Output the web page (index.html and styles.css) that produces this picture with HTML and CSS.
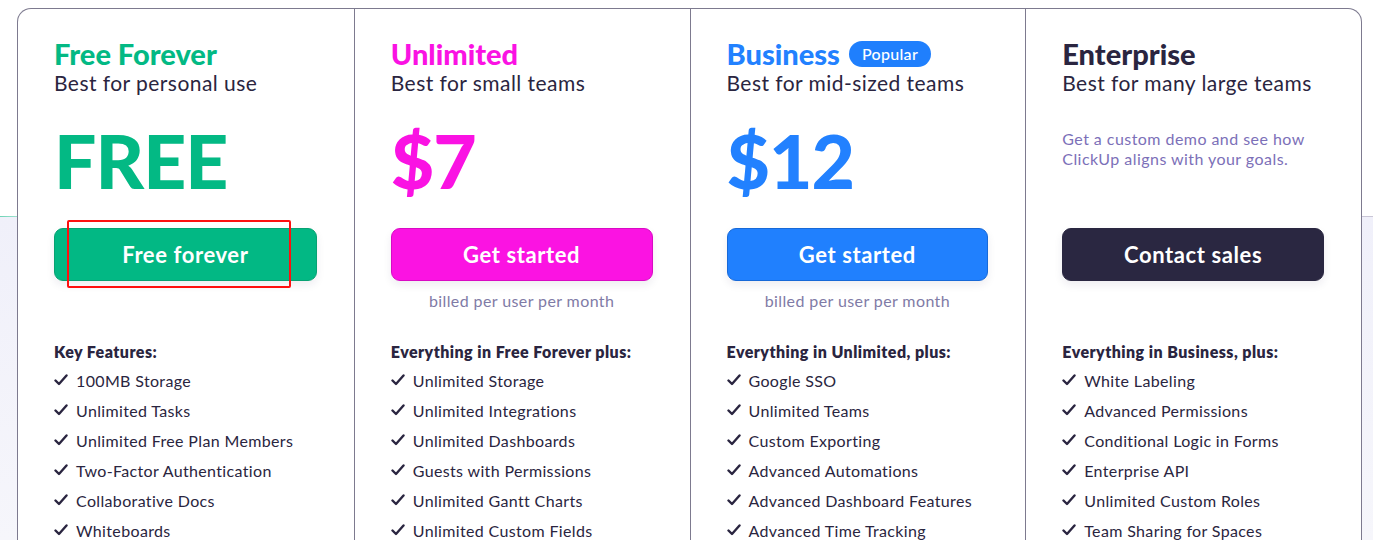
FILE: index.html
```html
<!DOCTYPE html>
<html lang="en">
<head>
<meta charset="utf-8">
<title>Pricing</title>
<link rel="stylesheet" href="styles.css">
</head>
<body>
<div class="page">
  <div class="card">
    <div class="plan">
      <div class="head">
        <h2 class="title green">Free Forever</h2>
        <p class="sub">Best for personal use</p>
        <div class="price green">FREE</div>
      </div>
      <div class="btnwrap">
        <a class="btn btn-green">Free forever</a>
        <span class="annot"></span>
      </div>
      <p class="billed blank">&nbsp;</p>
      <h3 class="feat-head">Key Features:</h3>
      <ul class="feats">
        <li><svg viewBox="0 0 14 12"><path d="M1.5 6.5 L5 10 L12.5 1.5"/></svg>100MB Storage</li>
        <li><svg viewBox="0 0 14 12"><path d="M1.5 6.5 L5 10 L12.5 1.5"/></svg>Unlimited Tasks</li>
        <li><svg viewBox="0 0 14 12"><path d="M1.5 6.5 L5 10 L12.5 1.5"/></svg>Unlimited Free Plan Members</li>
        <li><svg viewBox="0 0 14 12"><path d="M1.5 6.5 L5 10 L12.5 1.5"/></svg>Two-Factor Authentication</li>
        <li><svg viewBox="0 0 14 12"><path d="M1.5 6.5 L5 10 L12.5 1.5"/></svg>Collaborative Docs</li>
        <li><svg viewBox="0 0 14 12"><path d="M1.5 6.5 L5 10 L12.5 1.5"/></svg>Whiteboards</li>
      </ul>
    </div>
    <div class="plan">
      <div class="head">
        <h2 class="title pink">Unlimited</h2>
        <p class="sub">Best for small teams</p>
        <div class="price pink">$7</div>
      </div>
      <div class="btnwrap"><a class="btn btn-pink">Get started</a></div>
      <p class="billed">billed per user per month</p>
      <h3 class="feat-head">Everything in Free Forever plus:</h3>
      <ul class="feats">
        <li><svg viewBox="0 0 14 12"><path d="M1.5 6.5 L5 10 L12.5 1.5"/></svg>Unlimited Storage</li>
        <li><svg viewBox="0 0 14 12"><path d="M1.5 6.5 L5 10 L12.5 1.5"/></svg>Unlimited Integrations</li>
        <li><svg viewBox="0 0 14 12"><path d="M1.5 6.5 L5 10 L12.5 1.5"/></svg>Unlimited Dashboards</li>
        <li><svg viewBox="0 0 14 12"><path d="M1.5 6.5 L5 10 L12.5 1.5"/></svg>Guests with Permissions</li>
        <li><svg viewBox="0 0 14 12"><path d="M1.5 6.5 L5 10 L12.5 1.5"/></svg>Unlimited Gantt Charts</li>
        <li><svg viewBox="0 0 14 12"><path d="M1.5 6.5 L5 10 L12.5 1.5"/></svg>Unlimited Custom Fields</li>
      </ul>
    </div>
    <div class="plan">
      <div class="head">
        <h2 class="title blue">Business <span class="badge">Popular</span></h2>
        <p class="sub">Best for mid-sized teams</p>
        <div class="price blue">$12</div>
      </div>
      <div class="btnwrap"><a class="btn btn-blue">Get started</a></div>
      <p class="billed">billed per user per month</p>
      <h3 class="feat-head">Everything in Unlimited, plus:</h3>
      <ul class="feats">
        <li><svg viewBox="0 0 14 12"><path d="M1.5 6.5 L5 10 L12.5 1.5"/></svg>Google SSO</li>
        <li><svg viewBox="0 0 14 12"><path d="M1.5 6.5 L5 10 L12.5 1.5"/></svg>Unlimited Teams</li>
        <li><svg viewBox="0 0 14 12"><path d="M1.5 6.5 L5 10 L12.5 1.5"/></svg>Custom Exporting</li>
        <li><svg viewBox="0 0 14 12"><path d="M1.5 6.5 L5 10 L12.5 1.5"/></svg>Advanced Automations</li>
        <li><svg viewBox="0 0 14 12"><path d="M1.5 6.5 L5 10 L12.5 1.5"/></svg>Advanced Dashboard Features</li>
        <li><svg viewBox="0 0 14 12"><path d="M1.5 6.5 L5 10 L12.5 1.5"/></svg>Advanced Time Tracking</li>
      </ul>
    </div>
    <div class="plan">
      <div class="head">
        <h2 class="title dark">Enterprise</h2>
        <p class="sub">Best for many large teams</p>
        <p class="desc">Get a custom demo and see how ClickUp aligns with your goals.</p>
      </div>
      <div class="btnwrap"><a class="btn btn-dark">Contact sales</a></div>
      <p class="billed blank">&nbsp;</p>
      <h3 class="feat-head">Everything in Business, plus:</h3>
      <ul class="feats">
        <li><svg viewBox="0 0 14 12"><path d="M1.5 6.5 L5 10 L12.5 1.5"/></svg>White Labeling</li>
        <li><svg viewBox="0 0 14 12"><path d="M1.5 6.5 L5 10 L12.5 1.5"/></svg>Advanced Permissions</li>
        <li><svg viewBox="0 0 14 12"><path d="M1.5 6.5 L5 10 L12.5 1.5"/></svg>Conditional Logic in Forms</li>
        <li><svg viewBox="0 0 14 12"><path d="M1.5 6.5 L5 10 L12.5 1.5"/></svg>Enterprise API</li>
        <li><svg viewBox="0 0 14 12"><path d="M1.5 6.5 L5 10 L12.5 1.5"/></svg>Unlimited Custom Roles</li>
        <li><svg viewBox="0 0 14 12"><path d="M1.5 6.5 L5 10 L12.5 1.5"/></svg>Team Sharing for Spaces</li>
      </ul>
    </div>
  </div>
</div>
</body>
</html>
```
FILE: styles.css
```css
* { box-sizing: border-box; }
html, body { margin: 0; padding: 0; }
body {
  font-family: "Lato", "Open Sans", sans-serif;
  color: #2a2540;
  background:
    linear-gradient(to right, #6fd3b6 0, #9fe3cf 17px, transparent 17px) 0 216px / 100% 1px no-repeat,
    linear-gradient(to bottom, #ffffff 0, #ffffff 216px, #c9c6d6 216px, #c9c6d6 217px, #f0f0fa 217px, #f6f6fb 540px);
  overflow: hidden;
  height: 540px;
}
.page {
  padding: 8px 11px 0 17px;
}
.card {
  display: grid;
  grid-template-columns: repeat(4, 1fr);
  background: #fff;
  border: 1.5px solid #7d7a8f;
  border-bottom: none;
  border-radius: 14px 14px 0 0;
  height: 560px;
}
.plan {
  padding: 29px 37px 0 36px;
  display: flex;
  flex-direction: column;
}
.plan + .plan { border-left: 1px solid #7d7a8f; padding-left: 36px; }
.head { height: 190px; }
.title {
  margin: 0;
  font-size: 29px;
  line-height: 32px;
  font-weight: 900;
  display: flex;
  align-items: center;
  gap: 9px;
}
.green { color: #03b984; }
.pink { color: #fa12e3; }
.blue { color: #2281ff; }
.dark { color: #2a2540; }
.badge {
  background: #1f7ffd;
  color: #fff;
  font-size: 16px;
  font-weight: 500;
  letter-spacing: 0.3px;
  line-height: 26px;
  padding: 0 13px;
  border-radius: 13px;
}
.sub {
  margin: -1px 0 0;
  font-size: 21px;
  letter-spacing: 0.45px;
  line-height: 28px;
  color: #2a2540;
}
.price {
  margin-top: 21px;
  font-size: 75px;
  line-height: 84px;
  font-weight: 900;
  letter-spacing: -1px;
}
.desc {
  margin: 32px 0 0;
  font-size: 16px;
  letter-spacing: 0.45px;
  line-height: 20px;
  color: #7c70b8;
  max-width: 260px;
}
.btnwrap { position: relative; }
.btn {
  display: flex;
  align-items: center;
  justify-content: center;
  height: 53px;
  border-radius: 9px;
  color: #fff;
  font-size: 22px;
  letter-spacing: 0.6px;
  font-weight: 700;
  box-shadow: 0 4px 8px rgba(40, 30, 80, 0.08);
}
.btn-green { background: #02b884; border: 1px solid #07a273; }
.btn-pink { background: #fb13e2; border: 1px solid #d90ac4; }
.btn-blue { background: #2080fe; border: 1px solid #1769d8; }
.btn-dark { background: #2a2741; border: 1px solid #2a2741; }
.annot {
  position: absolute;
  left: 13px;
  top: -8px;
  width: 224px;
  height: 68px;
  border: 2.5px solid #ff1010;
  border-radius: 2px;
}
.billed {
  margin: 10px 0 0;
  text-align: center;
  font-size: 16px;
  letter-spacing: 0.4px;
  line-height: 20px;
  color: #7f7ba6;
}
.feat-head {
  margin: 31px 0 0;
  font-size: 16px;
  letter-spacing: 0.45px;
  line-height: 20px;
  font-weight: 800;
  color: #2a2540;
}
.feats {
  list-style: none;
  margin: 3px 0 0;
  padding: 0;
}
.feats li {
  display: flex;
  align-items: center;
  height: 30px;
  font-size: 16px;
  letter-spacing: 0.35px;
  color: #2a2540;
}
.feats svg {
  width: 14px;
  height: 12px;
  margin-right: 8px;
  flex: none;
  fill: none;
  stroke: #2a2540;
  stroke-width: 2.4;
  stroke-linecap: round;
  stroke-linejoin: round;
}
```
